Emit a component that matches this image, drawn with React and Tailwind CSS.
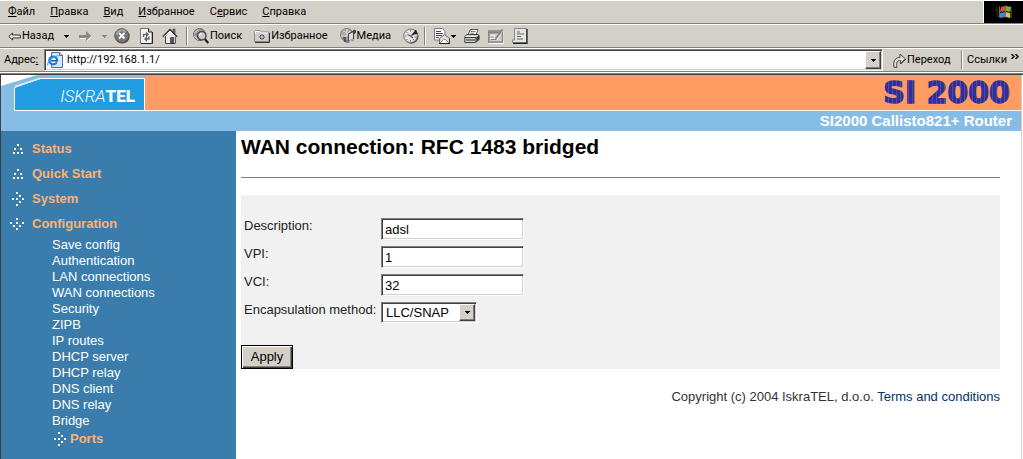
import React, { useState } from 'react';

const menuItems = [
  ['', 'Ф', 'айл'],
  ['', 'П', 'равка'],
  ['', 'В', 'ид'],
  ['', 'И', 'збранное'],
  ['С', 'е', 'рвис'],
  ['', 'С', 'правка'],
];

const sections = ['Status', 'Quick Start', 'System', 'Configuration'];

const configLinks = [
  'Save config',
  'Authentication',
  'LAN connections',
  'WAN connections',
  'Security',
  'ZIPB',
  'IP routes',
  'DHCP server',
  'DHCP relay',
  'DNS client',
  'DNS relay',
  'Bridge',
];

const Icon = ({ children, className = 'w-4 h-4' }) => (
  <svg className={`${className} shrink-0`} viewBox="0 0 16 16" fill="none" aria-hidden="true">
    {children}
  </svg>
);

const Caret = ({ color = '#000' }) => (
  <svg className="w-[5px] h-[3px] shrink-0" viewBox="0 0 5 3" shapeRendering="crispEdges" aria-hidden="true">
    <path d="M0 0h5v1H0zM1 1h3v1H1zM2 2h1v1H2z" fill={color} />
  </svg>
);

const Separator = () => <span className="w-[2px] h-[18px] shrink-0 border-l border-[#808080] bg-white" />;

const BackIcon = () => (
  <svg className="w-[13px] h-[9px] shrink-0" viewBox="0 0 13 9" fill="none" aria-hidden="true">
    <path d="M.8 4.5 4.5 1v2h7.8v3H4.5v2z" fill="#e8e6e0" stroke="#303030" />
  </svg>
);

const ForwardIcon = () => (
  <svg className="w-[13px] h-[11px] shrink-0" viewBox="0 0 13 11" aria-hidden="true">
    <path d="M1 5h7V2l5 4-5 4V8H1z" fill="#fff" />
    <path d="M0 4h7V0l5.500 5L7 10V7H0z" fill="#8c8a86" />
  </svg>
);

const StopIcon = () => (
  <Icon>
    <circle cx="8.300" cy="8.300" r="7.300" fill="#3a3a3a" />
    <circle cx="7.700" cy="7.700" r="7" fill="#777" stroke="#555" />
    <path d="M2.500 7a5.500 5.500 0 0 1 9.500-3" stroke="#a8a8a8" strokeWidth="2" />
    <path d="m5 5 5.500 5.500M10.500 5 5 10.500" stroke="#fff" strokeWidth="1.800" />
  </Icon>
);

const RefreshIcon = () => (
  <Icon>
    <path d="M2.500.500h8L14 4v11.500H2.500z" fill="#f4f4f2" stroke="#777" />
    <path d="M14.500 4v11.500H3" stroke="#222" />
    <path d="M10.500.500V4H14" stroke="#222" fill="#ccc" />
    <path d="M5.500 9V6.500H8" stroke="#666" strokeWidth="1.300" />
    <path d="M8 3.500v6l3-3z" fill="#666" />
    <path d="M11 8.500V11H9" stroke="#666" strokeWidth="1.300" />
    <path d="M9 8v6l-3-3z" fill="#666" />
  </Icon>
);

const HomeIcon = () => (
  <Icon>
    <path d="M11 1h2v5h-2z" fill="#777" stroke="#333" strokeWidth=".6" />
    <path d="M3.500 8v7.500h9.800V7L8 2z" fill="#eee" stroke="#444" />
    <path d="M.8 8.800 8 1.500l7.200 7.300" stroke="#333" strokeWidth="1.400" />
    <path d="M2.500 8.500 8 3l5.500 5.500" stroke="#fff" />
    <path d="M8.500 9.500h3v6h-3z" fill="#555" stroke="#222" strokeWidth=".6" />
  </Icon>
);

const SearchIcon = () => (
  <Icon>
    <circle cx="6.500" cy="6.500" r="6" fill="#999" stroke="#666" />
    <path d="M1.500 4.500c3-1 2-2 4-3M1 8c2 1 3 3 4 4" stroke="#e5e5e5" />
    <circle cx="8.800" cy="7.800" r="4.200" fill="#c8c8c8" stroke="#444" strokeWidth="1.400" />
    <path d="M6.500 8a2.200 2.200 0 0 1 2.300-2.300" stroke="#fff" strokeWidth="1.300" />
    <path d="m11.800 11 3.500 4" stroke="#222" strokeWidth="2.200" />
  </Icon>
);

const FavoritesIcon = () => (
  <Icon>
    <path d="M.5 13.500v-10l1-1H6l1 1.500h8v9.500z" fill="#cfcfcf" stroke="#888" />
    <path d="M1.500 6V3.500H6L7 5h7" stroke="#fff" />
    <path d="M1 14.500h14.500V5" stroke="#333" />
    <path d="M8 6v6M5 9h6M6 7l4 4M10 7l-4 4" stroke="#333" strokeWidth=".9" />
    <circle cx="8" cy="9" r=".9" fill="#fff" />
  </Icon>
);

const MediaIcon = () => (
  <Icon>
    <circle cx="6.800" cy="6.800" r="6.300" fill="#aaa" stroke="#777" />
    <path d="M3 2.500 8 6M7 1v6M1 8h6l3-5" stroke="#ddd" />
    <path d="M3 9h3v5H4z" fill="#555" />
    <path d="M8.500 13V6L13.500 3v8" stroke="#444" strokeWidth="1.200" />
    <path d="m9 6.500 4-2v6l-4 2z" fill="#ddd" />
    <ellipse cx="7.500" cy="13.500" rx="2" ry="1.500" fill="#777" />
    <ellipse cx="12.500" cy="12" rx="1.600" ry="1.300" fill="#999" />
    <path d="M14.200 2v4M14.200 2c1.800 0 1.500 2 1 3" stroke="#222" />
  </Icon>
);

const HistoryIcon = () => (
  <Icon>
    <circle cx="8.300" cy="8.500" r="7.200" fill="#444" />
    <circle cx="7.500" cy="7.800" r="6.800" fill="#e4e4e4" stroke="#777" />
    <path d="M7.500 8 13 1.500l1.500 4z" fill="#222" />
    <path d="M7.500 8 4.500 6.500M7.500 8l2.500 2" stroke="#555" strokeWidth="1.200" />
    <path d="M7.500 2v1.500M7.500 12v1.500M2 8h1.500M11.500 9H13M3.500 4l1 1M3.500 12l1-1M11 12l-1-1" stroke="#777" />
  </Icon>
);

const MailIcon = () => (
  <Icon>
    <path d="M.5.500h8l2.500 3v8.500H.5z" fill="#fff" stroke="#777" />
    <path d="M2 3.500h5M2 5.500h7M2 7.500h6M2 9.500h3" stroke="#444" />
    <path d="m5.500 10.500 5-4 5 4v5h-10z" fill="#ddd" stroke="#666" />
    <path d="m6 15 3.500-3.500h2L15 15" fill="#f8f8f8" stroke="#777" strokeWidth=".8" />
    <path d="M5 15.500h11V10" stroke="#222" />
  </Icon>
);

const PrintIcon = () => (
  <Icon>
    <path d="M4 7 6.500 1.500H14L12 7z" fill="#fff" stroke="#555" />
    <path d="M7 3.500h4.500M6.300 5.200h4" stroke="#777" />
    <path d="M.8 8.500 3 6.500h11l1.200 1v4l-3.500 3H.8z" fill="#ccc" stroke="#444" />
    <path d="M1 9.500h11v4.500M2 12h9" stroke="#333" />
    <path d="M1.500 8.500h10" stroke="#fff" />
    <path d="M12.500 9.500 15 7v4l-2.500 3z" fill="#333" />
  </Icon>
);

const EditIcon = () => (
  <Icon>
    <path d="M1.500 3.500h14v12h-14z" stroke="#fff" />
    <path d="M.8 3h13.700v11H.8z" fill="#d4d0c8" stroke="#858585" strokeWidth="1.500" />
    <path d="M1 4.500h13" stroke="#858585" strokeWidth="2" />
    <path d="M3 8h4M3 10.500h7" stroke="#fff" strokeWidth="1.300" />
    <path d="M3 9h3M3 11.500h6" stroke="#858585" />
    <path d="m8.500 11.500 6.500-9" stroke="#fff" />
    <path d="m7.500 11 7-9.500" stroke="#858585" strokeWidth="2" />
  </Icon>
);

const DiscussIcon = () => (
  <Icon>
    <path d="M2.500.500h12v14H.5V12h2z" fill="#e4e4e4" stroke="#888" />
    <path d="M15 1v14.500H1" stroke="#222" strokeWidth="1.300" />
    <path d="M5 4h3M5 6h7M5 8.500h4M5 11h6" stroke="#666" />
  </Icon>
);

const PageIcon = () => (
  <Icon>
    <path d="M4.500.500h8l3 3v12h-11z" fill="#d9e8fb" stroke="#4a6ea8" />
    <path d="M12.500.500v3h3" fill="#b8d0f0" stroke="#4a6ea8" />
    <circle cx="6.200" cy="8.500" r="3.900" fill="#fff" stroke="#1e78d0" strokeWidth="2.200" />
    <path d="M3.500 8.800h6.500" stroke="#1665c0" strokeWidth="1.600" />
    <path d="M9.500 9.700h2l-1 2z" fill="#d9e8fb" />
    <path d="M1 13.500C-.5 11 4 5 11.500 3.500" stroke="#3aa0f0" strokeWidth="1.200" />
  </Icon>
);

const GoIcon = () => (
  <svg className="w-[13px] h-[15px] shrink-0" viewBox="0 0 13 15" aria-hidden="true">
    <path d="M1 14.300C0 8 2 4.500 7 4.500V1l5.500 5L7.500 11V7.500C4 7.500 3 9.500 4 14.300z" fill="#e2e0dc" stroke="#444" />
    <path d="M8 10.500 12.500 6" stroke="#111" />
  </svg>
);

const WindowsFlag = () => (
  <svg className="w-[18px] h-[16px]" viewBox="0 0 18 16" aria-hidden="true">
    <path d="m6 3 4-1v5L5 8z" fill="#d8562e" />
    <path d="m11 2 5 1-1 5-4-1z" fill="#7fae38" />
    <path d="m5 9 5-1v5l-5 1z" fill="#4386d8" />
    <path d="m11 8 4 1v5l-4-1z" fill="#e6c13a" />
    <path d="M4.500 2.500v11M10.500 1.500v12M16 3v11" stroke="#999" strokeWidth=".7" />
    <path d="M1 4h2M0 6h3M2 8h2M1 10h2M2 12h2" stroke="#5b3a3a" />
  </svg>
);

// dotted bullets of the menu, one pair of coordinates per dot
const bullets = {
  up: [[7, 2], [4, 6], [10, 6], [3, 10], [7, 10], [11, 10]],
  right: [[6, 0], [9, 3], [2, 6], [6, 6], [12, 6], [9, 9], [6, 12]],
  down: [[6, 1], [0, 5], [6, 5], [12, 5], [3, 8], [9, 8], [6, 11]],
};

const Bullet = ({ kind }) => (
  <svg className="w-[14px] h-[14px] shrink-0" viewBox="0 0 14 14" fill="#fff" shapeRendering="crispEdges" aria-hidden="true">
    {bullets[kind].map(([x, y]) => (
      <rect key={`${x}-${y}`} x={x} y={y} width="2" height="2" />
    ))}
  </svg>
);

const ToolButton = ({ label, icon, children }) => (
  <button type="button" aria-label={label} className="flex items-center gap-px">
    {icon}
    {children}
  </button>
);

const BrowserChrome = () => {
  const [address, setAddress] = useState('http://192.168.1.1/');

  return (
    <div className="bg-[#d4d0c8] border-t border-white font-['Roboto',sans-serif] text-[11px] leading-4 text-black">
      {/* Menu */}
      <div className="flex h-[23px] border-b border-[#808080]">
        <nav className="flex flex-1 items-center gap-[15px] pl-2">
          {menuItems.map(([before, key, after]) => (
            <button type="button" key={before + key + after}>
              {before}<span className="underline">{key}</span>{after}
            </button>
          ))}
        </nav>
        <div className="flex w-10 items-center justify-center border-l border-white bg-black">
          <WindowsFlag />
        </div>
      </div>

      {/* Toolbar */}
      <div className="flex h-6 items-center border-t border-b border-t-white border-b-[#808080] pl-2">
        <div className="flex w-[106px] items-center gap-[10px]">
          <ToolButton label="Назад" icon={<BackIcon />}>Назад</ToolButton>
          <Caret />
          <ToolButton label="Вперед" icon={<ForwardIcon />} />
          <Caret color="#8c8a86" />
        </div>
        <div className="flex items-center gap-2">
          <ToolButton label="Остановить" icon={<StopIcon />} />
          <ToolButton label="Обновить" icon={<RefreshIcon />} />
          <ToolButton label="Домой" icon={<HomeIcon />} />
          <Separator />
        </div>
        <div className="flex items-center gap-3 pl-[5px]">
          <ToolButton label="Поиск" icon={<SearchIcon />}>Поиск</ToolButton>
          <ToolButton label="Избранное" icon={<FavoritesIcon />}>Избранное</ToolButton>
          <ToolButton label="Медиа" icon={<MediaIcon />}>Медиа</ToolButton>
          <ToolButton label="Журнал" icon={<HistoryIcon />} />
        </div>
        <div className="flex items-center gap-2 pl-[5px]">
          <Separator />
          <ToolButton label="Почта" icon={<MailIcon />}><Caret /></ToolButton>
          <ToolButton label="Печать" icon={<PrintIcon />} />
          <ToolButton label="Правка" icon={<EditIcon />} />
          <ToolButton label="Обсудить" icon={<DiscussIcon />} />
        </div>
      </div>

      {/* Address bar */}
      <div className="flex h-6 items-center border-t border-b border-t-white border-b-[#808080] pl-1">
        <label htmlFor="address" className="w-10">Адрес<span className="underline">:</span></label>
        <div className="flex h-[22px] flex-1 items-center border border-t-[#808080] border-l-[#808080] border-r-white border-b-white bg-white pl-[2px] pr-px shadow-[inset_1px_1px_0_#404040,inset_-1px_-1px_0_#d4d0c8]">
          <PageIcon />
          <input
            id="address"
            type="text"
            value={address}
            onChange={(e) => setAddress(e.target.value)}
            className="min-w-0 flex-1 bg-transparent pl-1 outline-none"
          />
          <button type="button" aria-label="Список адресов" className="flex h-[18px] w-4 items-center justify-center border border-t-white border-l-white border-r-[#404040] border-b-[#404040] bg-[#d4d0c8] shadow-[inset_-1px_-1px_0_#808080]">
            <Caret />
          </button>
        </div>
        <button type="button" className="ml-[10px] flex w-[68px] items-center gap-px">
          <GoIcon />
          Переход
        </button>
        <Separator />
        <button type="button" className="flex w-[60px] items-center justify-between px-1">
          Ссылки
          <svg className="mb-2 w-[8px] h-[5px]" viewBox="0 0 8 5" fill="none" stroke="#000" strokeWidth="1.400" aria-hidden="true">
            <path d="m.5 0 2.500 2.500L.5 5M4.500 0 7 2.500 4.500 5" />
          </svg>
        </button>
      </div>
      <div className="h-[3px] border-t border-b border-t-white border-b-[#404040] bg-[#808080]" />
    </div>
  );
};

const Header = () => (
  <header>
    <div className="flex h-9">
      <svg className="w-36 h-9 shrink-0" viewBox="0 0 144 36" role="img" aria-label="IskraTEL">
        <path d="M0 0h144v36H0z" fill="#86bde6" />
        <path d="M0 0h36L0 11z" fill="#fff" />
        <path d="M13.500 35.500v-23L39 3.500h104.500v32z" fill="#229de2" stroke="#fff" />
        <path d="M14 11.500 39 3.500" stroke="#d8ecfa" strokeWidth="1.500" />
        <text x="134" y="27" textAnchor="end" fill="#fff" fontFamily="Roboto, sans-serif" fontSize="17">
          <tspan fontStyle="italic" fontWeight="300">ISKRA</tspan>
          <tspan fontWeight="900">TEL</tspan>
        </text>
      </svg>
      <div className="flex flex-1 items-center justify-end border-b border-white bg-[#ff9c63] pr-[9px]">
        <svg className="w-[140px] h-[35px]" viewBox="0 0 140 35" role="img" aria-label="SI 2000">
          <defs>
            <pattern id="stripes" width="4" height="35" patternUnits="userSpaceOnUse">
              <path d="M0 0h4v35H0z" fill="#2f2f9c" />
              <path d="M0 0h1v35H0z" fill="#5c4890" />
            </pattern>
          </defs>
          <text x="138" y="28" textAnchor="end" fill="url(#stripes)" stroke="url(#stripes)" strokeWidth="1.500" fontFamily="DejaVu Sans, sans-serif" fontWeight="700" fontSize="30">
            SI 2000
          </text>
        </svg>
      </div>
    </div>
    <div className="h-5 bg-[#86bde6] pr-[9px] text-right text-[15px] leading-5 font-bold text-white">
      SI2000 Callisto821+ Router
    </div>
  </header>
);

const Sidebar = () => (
  <nav className="w-[235px] shrink-0 bg-[#3a7dad] pt-[5px] text-[13px]">
    {sections.map((name, i) => (
      <a key={name} href="#" className="flex h-[25px] items-center gap-2 pl-[9px] font-bold text-[#ffb072]">
        <Bullet kind={['up', 'up', 'right', 'down'][i]} />
        {name}
      </a>
    ))}
    <ul className="pt-px pl-[51px] leading-4 text-white">
      {configLinks.map((name) => (
        <li key={name}><a href="#">{name}</a></li>
      ))}
      <li>
        <a href="#" className="flex h-5 items-center gap-1 font-bold text-[#ffb072]">
          <Bullet kind="right" />
          Ports
        </a>
      </li>
    </ul>
  </nav>
);

const TextField = ({ id, label, value, onChange }) => (
  <tr className="h-7">
    <td className="w-[137px] align-top whitespace-nowrap">
      <label htmlFor={id}>{label}</label>
    </td>
    <td className="align-top">
      <input
        id={id}
        type="text"
        value={value}
        onChange={(e) => onChange(e.target.value)}
        className="block h-[22px] w-[143px] border border-t-[#808080] border-l-[#808080] border-r-white border-b-white bg-white px-[3px] text-black shadow-[inset_1px_1px_0_#404040,inset_-1px_-1px_0_#d4d0c8] outline-none"
      />
    </td>
  </tr>
);

const ConnectionForm = () => {
  const [description, setDescription] = useState('adsl');
  const [vpi, setVpi] = useState('1');
  const [vci, setVci] = useState('32');
  const [method, setMethod] = useState('LLC/SNAP');

  return (
    <form onSubmit={(e) => e.preventDefault()} className="bg-[#f1f1f1] pt-[23px] text-[13px] leading-4 text-[#222]">
      <table className="ml-[3px]">
        <tbody>
          <TextField id="description" label="Description:" value={description} onChange={setDescription} />
          <TextField id="vpi" label="VPI:" value={vpi} onChange={setVpi} />
          <TextField id="vci" label="VCI:" value={vci} onChange={setVci} />
          <tr>
            <td className="align-top whitespace-nowrap">
              <label htmlFor="method">Encapsulation method:</label>
            </td>
            <td className="align-top">
              <div className="relative w-24">
                <select
                  id="method"
                  value={method}
                  onChange={(e) => setMethod(e.target.value)}
                  className="block h-[21px] w-full appearance-none border border-t-[#808080] border-l-[#808080] border-r-white border-b-white bg-white pl-1 text-black shadow-[inset_1px_1px_0_#404040,inset_-1px_-1px_0_#d4d0c8] outline-none"
                >
                  <option>LLC/SNAP</option>
                  <option>VcMux</option>
                </select>
                <span className="pointer-events-none absolute top-[2px] right-[2px] flex h-[17px] w-4 items-center justify-center border border-t-white border-l-white border-r-[#404040] border-b-[#404040] bg-[#d4d0c8] shadow-[inset_-1px_-1px_0_#808080]">
                  <Caret />
                </span>
              </div>
            </td>
          </tr>
        </tbody>
      </table>
      <button
        type="submit"
        className="mt-[22px] block h-6 w-[52px] border border-black bg-[#d4d0c8] text-black shadow-[inset_1px_1px_0_#fff,inset_-1px_-1px_0_#404040,inset_-2px_-2px_0_#808080]"
      >
        Apply
      </button>
    </form>
  );
};

const App = () => (
  <div className="flex min-h-screen flex-col bg-white font-['Liberation_Sans',sans-serif]">
    <BrowserChrome />
    <div className="mr-px flex flex-1 flex-col border-l border-r border-l-[#404040] border-r-[#d4d0c8]">
      <Header />
      <div className="flex flex-1">
        <Sidebar />
        <main className="flex-1 pr-[21px] pl-[5px]">
          <h1 className="pt-1 text-[21px] leading-6 font-bold text-black">WAN connection: RFC 1483 bridged</h1>
          <hr className="mt-[18px] mb-[17px] border-[#808080]" />
          <ConnectionForm />
          <footer className="pt-5 text-right text-[13px] leading-4 text-[#333]">
            Copyright (c) 2004 IskraTEL, d.o.o. <a href="#" className="text-[#003366]">Terms and conditions</a>
          </footer>
        </main>
      </div>
    </div>
  </div>
);

export default App;
